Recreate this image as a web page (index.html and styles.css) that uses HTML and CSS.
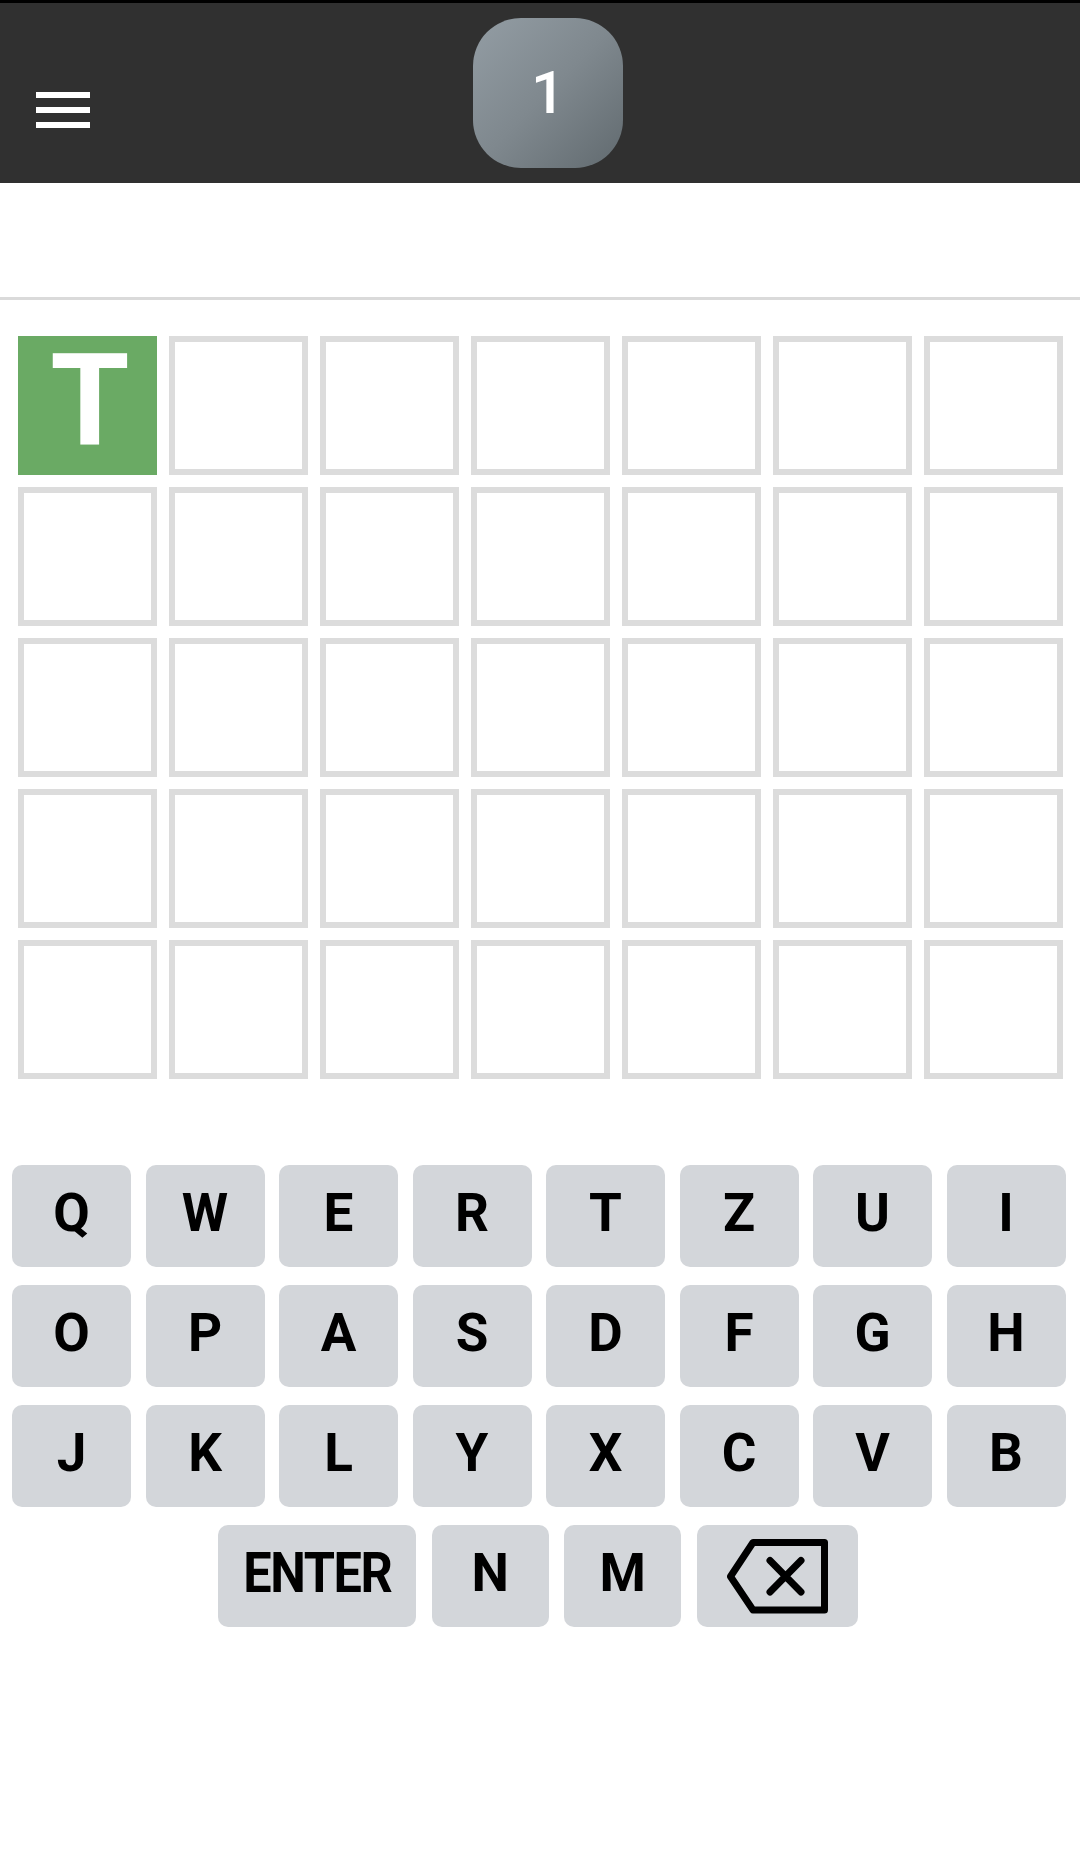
FILE: index.html
```html
<!DOCTYPE html>
<html lang="de">
<head>
<meta charset="utf-8">
<title>Wordle</title>
<link rel="stylesheet" href="styles.css">
</head>
<body>
<header class="header">
  <button class="menu" aria-label="Menü"><span></span><span></span><span></span></button>
  <div class="badge">1</div>
</header>
<div class="subbar"></div>
<main class="board">
  <div class="tile correct">T</div><div class="tile"></div><div class="tile"></div><div class="tile"></div><div class="tile"></div><div class="tile"></div><div class="tile"></div>
  <div class="tile"></div><div class="tile"></div><div class="tile"></div><div class="tile"></div><div class="tile"></div><div class="tile"></div><div class="tile"></div>
  <div class="tile"></div><div class="tile"></div><div class="tile"></div><div class="tile"></div><div class="tile"></div><div class="tile"></div><div class="tile"></div>
  <div class="tile"></div><div class="tile"></div><div class="tile"></div><div class="tile"></div><div class="tile"></div><div class="tile"></div><div class="tile"></div>
  <div class="tile"></div><div class="tile"></div><div class="tile"></div><div class="tile"></div><div class="tile"></div><div class="tile"></div><div class="tile"></div>
</main>
<section class="keyboard">
  <div class="row">
    <div class="key">Q</div><div class="key">W</div><div class="key">E</div><div class="key">R</div><div class="key">T</div><div class="key">Z</div><div class="key">U</div><div class="key">I</div>
  </div>
  <div class="row">
    <div class="key">O</div><div class="key">P</div><div class="key">A</div><div class="key">S</div><div class="key">D</div><div class="key">F</div><div class="key">G</div><div class="key">H</div>
  </div>
  <div class="row">
    <div class="key">J</div><div class="key">K</div><div class="key">L</div><div class="key">Y</div><div class="key">X</div><div class="key">C</div><div class="key">V</div><div class="key">B</div>
  </div>
  <div class="row last">
    <div class="key enter"><span>ENTER</span></div>
    <div class="key small">N</div>
    <div class="key small">M</div>
    <div class="key back">
      <svg width="161" height="102" viewBox="0 0 161 102" aria-hidden="true">
        <path d="M56 17.5 H127.5 V85 H56 L33.5 51.5 Z" fill="none" stroke="#000" stroke-width="7" stroke-linejoin="round"/>
        <path d="M73 35.5 L104 67 M104 35.5 L73 67" fill="none" stroke="#000" stroke-width="7" stroke-linecap="round"/>
      </svg>
    </div>
  </div>
</section>
</body>
</html>
```

FILE: styles.css
```css
body {
  margin: 0;
  background: #ffffff;
  font-family: Roboto, "Liberation Sans", Arial, sans-serif;
}

.header {
  border-top: 3px solid #000000;
  height: 180px;
  background: #303030;
  display: flex;
  align-items: flex-start;
}

.menu {
  margin: 89px 0 0 36px;
  width: 54px;
  padding: 0;
  border: 0;
  background: none;
  display: flex;
  flex-direction: column;
  gap: 9px;
}

.menu span {
  display: block;
  height: 6px;
  background: #ffffff;
}

.badge {
  margin: 15px 0 0 383px;
  width: 150px;
  height: 150px;
  border-radius: 48px;
  background: linear-gradient(135deg, #939da4 0%, #7f888e 50%, #616a6f 100%);
  color: #ffffff;
  font-size: 60px;
  font-weight: 500;
  display: flex;
  align-items: center;
  justify-content: center;
  padding-bottom: 2px;
  box-sizing: border-box;
}

.subbar {
  height: 114px;
  border-bottom: 3px solid #dadada;
}

.board {
  display: grid;
  grid-template-columns: repeat(7, 139px);
  grid-auto-rows: 139px;
  gap: 12px;
  padding: 36px 0 0 18px;
}

.tile {
  box-sizing: border-box;
  border: 6px solid #dcdcdc;
}

.tile.correct {
  border: 0;
  background: #6aaa64;
  color: #ffffff;
  font-weight: 700;
  font-size: 128px;
  display: flex;
  align-items: center;
  justify-content: center;
  padding: 0 0 12px 5px;
}

.keyboard {
  margin-top: 86px;
  display: flex;
  flex-direction: column;
  gap: 18px;
}

.row {
  display: grid;
  grid-template-columns: repeat(8, 119px);
  column-gap: 14.5px;
  padding-left: 12px;
}

.row.last {
  display: flex;
  justify-content: center;
  gap: 15.5px;
  padding: 0 4px 0 0;
}

.key {
  height: 102px;
  border-radius: 10px;
  background: #d3d6da;
  color: #000000;
  font-size: 53px;
  font-weight: 700;
  display: flex;
  align-items: center;
  justify-content: center;
  padding-bottom: 7px;
  box-sizing: border-box;
}

.key.enter {
  width: 198px;
  font-size: 56px;
}

.key.enter span {
  display: inline-block;
  transform: scaleX(0.9);
  letter-spacing: -1.5px;
}

.key.small {
  width: 117px;
}

.key.back {
  width: 161px;
  padding: 0;
}

.key.back svg {
  display: block;
}
```
